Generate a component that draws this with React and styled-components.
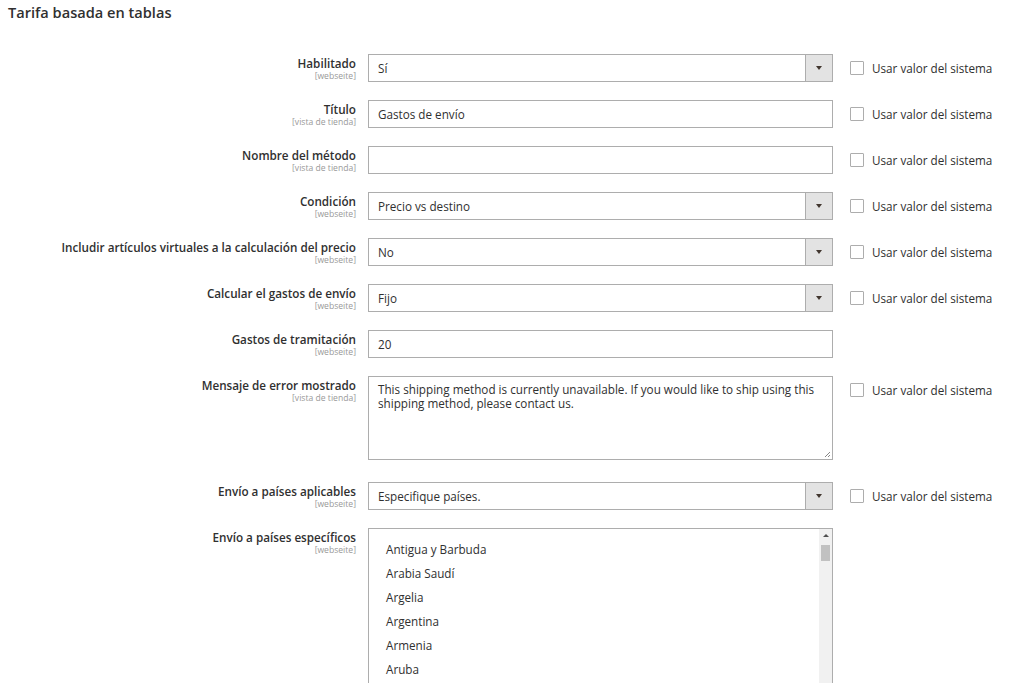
import React from 'react';
import styled, { createGlobalStyle } from 'styled-components';

const GlobalStyle = createGlobalStyle`
    html, body {
        margin: 0;
        padding: 0;
        background: #fff;
        overflow: hidden;
    }
    body {
        font-family: "Open Sans", "Liberation Sans", sans-serif;
        color: #303030;
    }
`;

const Page = styled.div`
    padding: 2px 0 0 8px;
    width: 1016px;
    height: 681px;
    overflow: hidden;
`;

const Heading = styled.h2`
    margin: 0 0 32px;
    font-size: 14.6px;
    font-weight: 600;
    line-height: 20px;
    color: #303030;
`;

const Form = styled.div`
    display: grid;
    grid-template-columns: 348px 465px auto;
    column-gap: 12px;
    row-gap: 18px;
    align-items: start;
`;

const Label = styled.div`
    text-align: right;
    padding-top: 2px;
`;

const LabelText = styled.div`
    font-size: 11.7px;
    font-weight: 600;
    line-height: 14px;
    color: #303030;
`;

const Scope = styled.div`
    font-size: 8.6px;
    line-height: 12px;
    color: #999;
`;

const Input = styled.div`
    box-sizing: border-box;
    height: 28px;
    border: 1px solid #adadad;
    background: #fff;
    display: flex;
    align-items: center;
    padding-left: 9px;
    font-size: 11.7px;
    color: #303030;
`;

const Select = styled(Input)`
    padding-left: 0;
    justify-content: space-between;
`;

const SelectValue = styled.span`
    padding-left: 9px;
`;

const Arrow = styled.span`
    width: 26px;
    height: 100%;
    background: #e3e3e3;
    border-left: 1px solid #adadad;
    display: flex;
    align-items: center;
    justify-content: center;

    &::after {
        content: '';
        border-left: 3px solid transparent;
        border-right: 3px solid transparent;
        border-top: 4px solid #41362f;
    }
`;

const TextArea = styled.div`
    box-sizing: border-box;
    height: 84px;
    margin-bottom: 4px;
    border: 1px solid #adadad;
    padding: 5px 0 5px 9px;
    font-size: 11.7px;
    line-height: 14px;
    white-space: pre;
    overflow: hidden;
    position: relative;
`;

const Grip = styled.svg`
    position: absolute;
    right: 1px;
    bottom: 1px;
`;

const ListBox = styled.div`
    box-sizing: border-box;
    height: 170px;
    border: 1px solid #adadad;
    display: flex;
`;

const Options = styled.div`
    flex: 1;
    padding: 8px 0 0 17px;
`;

const Option = styled.div`
    font-size: 11.7px;
    line-height: 24px;
    color: #303030;
`;

const ScrollBar = styled.div`
    width: 13px;
    background: #f1f1f1;
    display: flex;
    flex-direction: column;
    align-items: center;
`;

const ScrollUp = styled.span`
    margin-top: 5px;
    border-left: 3px solid transparent;
    border-right: 3px solid transparent;
    border-bottom: 3px solid #505050;
`;

const Thumb = styled.span`
    margin-top: 8px;
    width: 9px;
    height: 16px;
    background: #c1c1c1;
`;

const Inherit = styled.label`
    display: flex;
    align-items: center;
    gap: 8px;
    height: 28px;
    padding-left: 5px;
    font-size: 11.7px;
    color: #303030;
`;

const Box = styled.span`
    box-sizing: border-box;
    width: 14px;
    height: 14px;
    border: 1px solid #adadad;
    border-radius: 1px;
    background: #fff;
`;

const Empty = styled.div``;

const countries = ['Antigua y Barbuda', 'Arabia Saudí', 'Argelia', 'Argentina', 'Armenia', 'Aruba'];

const rows = [
    { label: 'Habilitado', scope: '[webseite]', type: 'select', value: 'Sí', inherit: true },
    { label: 'Título', scope: '[vista de tienda]', type: 'text', value: 'Gastos de envío', inherit: true },
    { label: 'Nombre del método', scope: '[vista de tienda]', type: 'text', value: '', inherit: true },
    { label: 'Condición', scope: '[webseite]', type: 'select', value: 'Precio vs destino', inherit: true },
    { label: 'Includir artículos virtuales a la calculación del precio', scope: '[webseite]', type: 'select', value: 'No', inherit: true },
    { label: 'Calcular el gastos de envío', scope: '[webseite]', type: 'select', value: 'Fijo', inherit: true },
    { label: 'Gastos de tramitación', scope: '[webseite]', type: 'text', value: '20', inherit: false },
    { label: 'Mensaje de error mostrado', scope: '[vista de tienda]', type: 'textarea', value: 'This shipping method is currently unavailable. If you would like to ship using this\nshipping method, please contact us.', inherit: true },
    { label: 'Envío a países aplicables', scope: '[webseite]', type: 'select', value: 'Especifique países.', inherit: true },
    { label: 'Envío a países específicos', scope: '[webseite]', type: 'list', inherit: false },
];

const Control = ({ row }) => {
    if (row.type === 'select') {
        return (
            <Select>
                <SelectValue>{row.value}</SelectValue>
                <Arrow />
            </Select>
        );
    }
    if (row.type === 'textarea') {
        return (
            <TextArea>
                {row.value}
                <Grip width="7" height="7" viewBox="0 0 7 7">
                    <path d="M6 1L1 6M6 4L4 6" stroke="#888" strokeWidth="1" />
                </Grip>
            </TextArea>
        );
    }
    if (row.type === 'list') {
        return (
            <ListBox>
                <Options>
                    {countries.map((c) => <Option key={c}>{c}</Option>)}
                </Options>
                <ScrollBar>
                    <ScrollUp />
                    <Thumb />
                </ScrollBar>
            </ListBox>
        );
    }
    return <Input>{row.value}</Input>;
};

const App = () => {
    return (
        <Page>
            <GlobalStyle />
            <Heading>Tarifa basada en tablas</Heading>
            <Form>
                {rows.map((row) => (
                    <React.Fragment key={row.label}>
                        <Label>
                            <LabelText>{row.label}</LabelText>
                            <Scope>{row.scope}</Scope>
                        </Label>
                        <Control row={row} />
                        {row.inherit ? (
                            <Inherit>
                                <Box />
                                Usar valor del sistema
                            </Inherit>
                        ) : <Empty />}
                    </React.Fragment>
                ))}
            </Form>
        </Page>
    );
};

export default App;
